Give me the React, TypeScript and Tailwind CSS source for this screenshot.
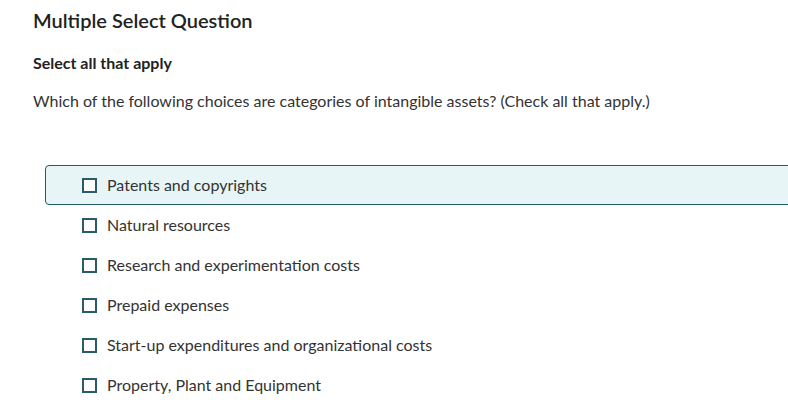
import React from 'react';

const options = [
  'Patents and copyrights',
  'Natural resources',
  'Research and experimentation costs',
  'Prepaid expenses',
  'Start-up expenditures and organizational costs',
  'Property, Plant and Equipment',
];

export default function App() {
  return (
    <div className="w-[788px] h-[411px] overflow-hidden bg-white text-[#333] font-['Lato',sans-serif]">
      <div className="pl-[33px] pt-[7px]">
        <h1 className="text-[20px] font-semibold text-[#222] leading-[26px]">Multiple Select Question</h1>
        <h2 className="mt-[20px] text-[16px] font-bold text-[#222] leading-[20px]">Select all that apply</h2>
        <p className="mt-[18px] text-[16px] leading-[20px]">
          Which of the following choices are categories of intangible assets? (Check all that apply.)
        </p>
      </div>
      <ul className="mt-[54px] ml-[45px] w-[800px]">
        {options.map((opt, i) => (
          <li
            key={opt}
            className={`flex items-center h-[40px] pl-[36px] rounded-l-[4px] border ${
              i === 0 ? 'bg-[#e7f5f7] border-[#275a67]' : 'border-transparent'
            }`}
          >
            <span className="w-[15px] h-[15px] border-2 border-[#2b5a69] bg-white shrink-0" />
            <span className="ml-[10px] text-[16px] leading-[20px] -mt-[1px]">{opt}</span>
          </li>
        ))}
      </ul>
    </div>
  );
}
